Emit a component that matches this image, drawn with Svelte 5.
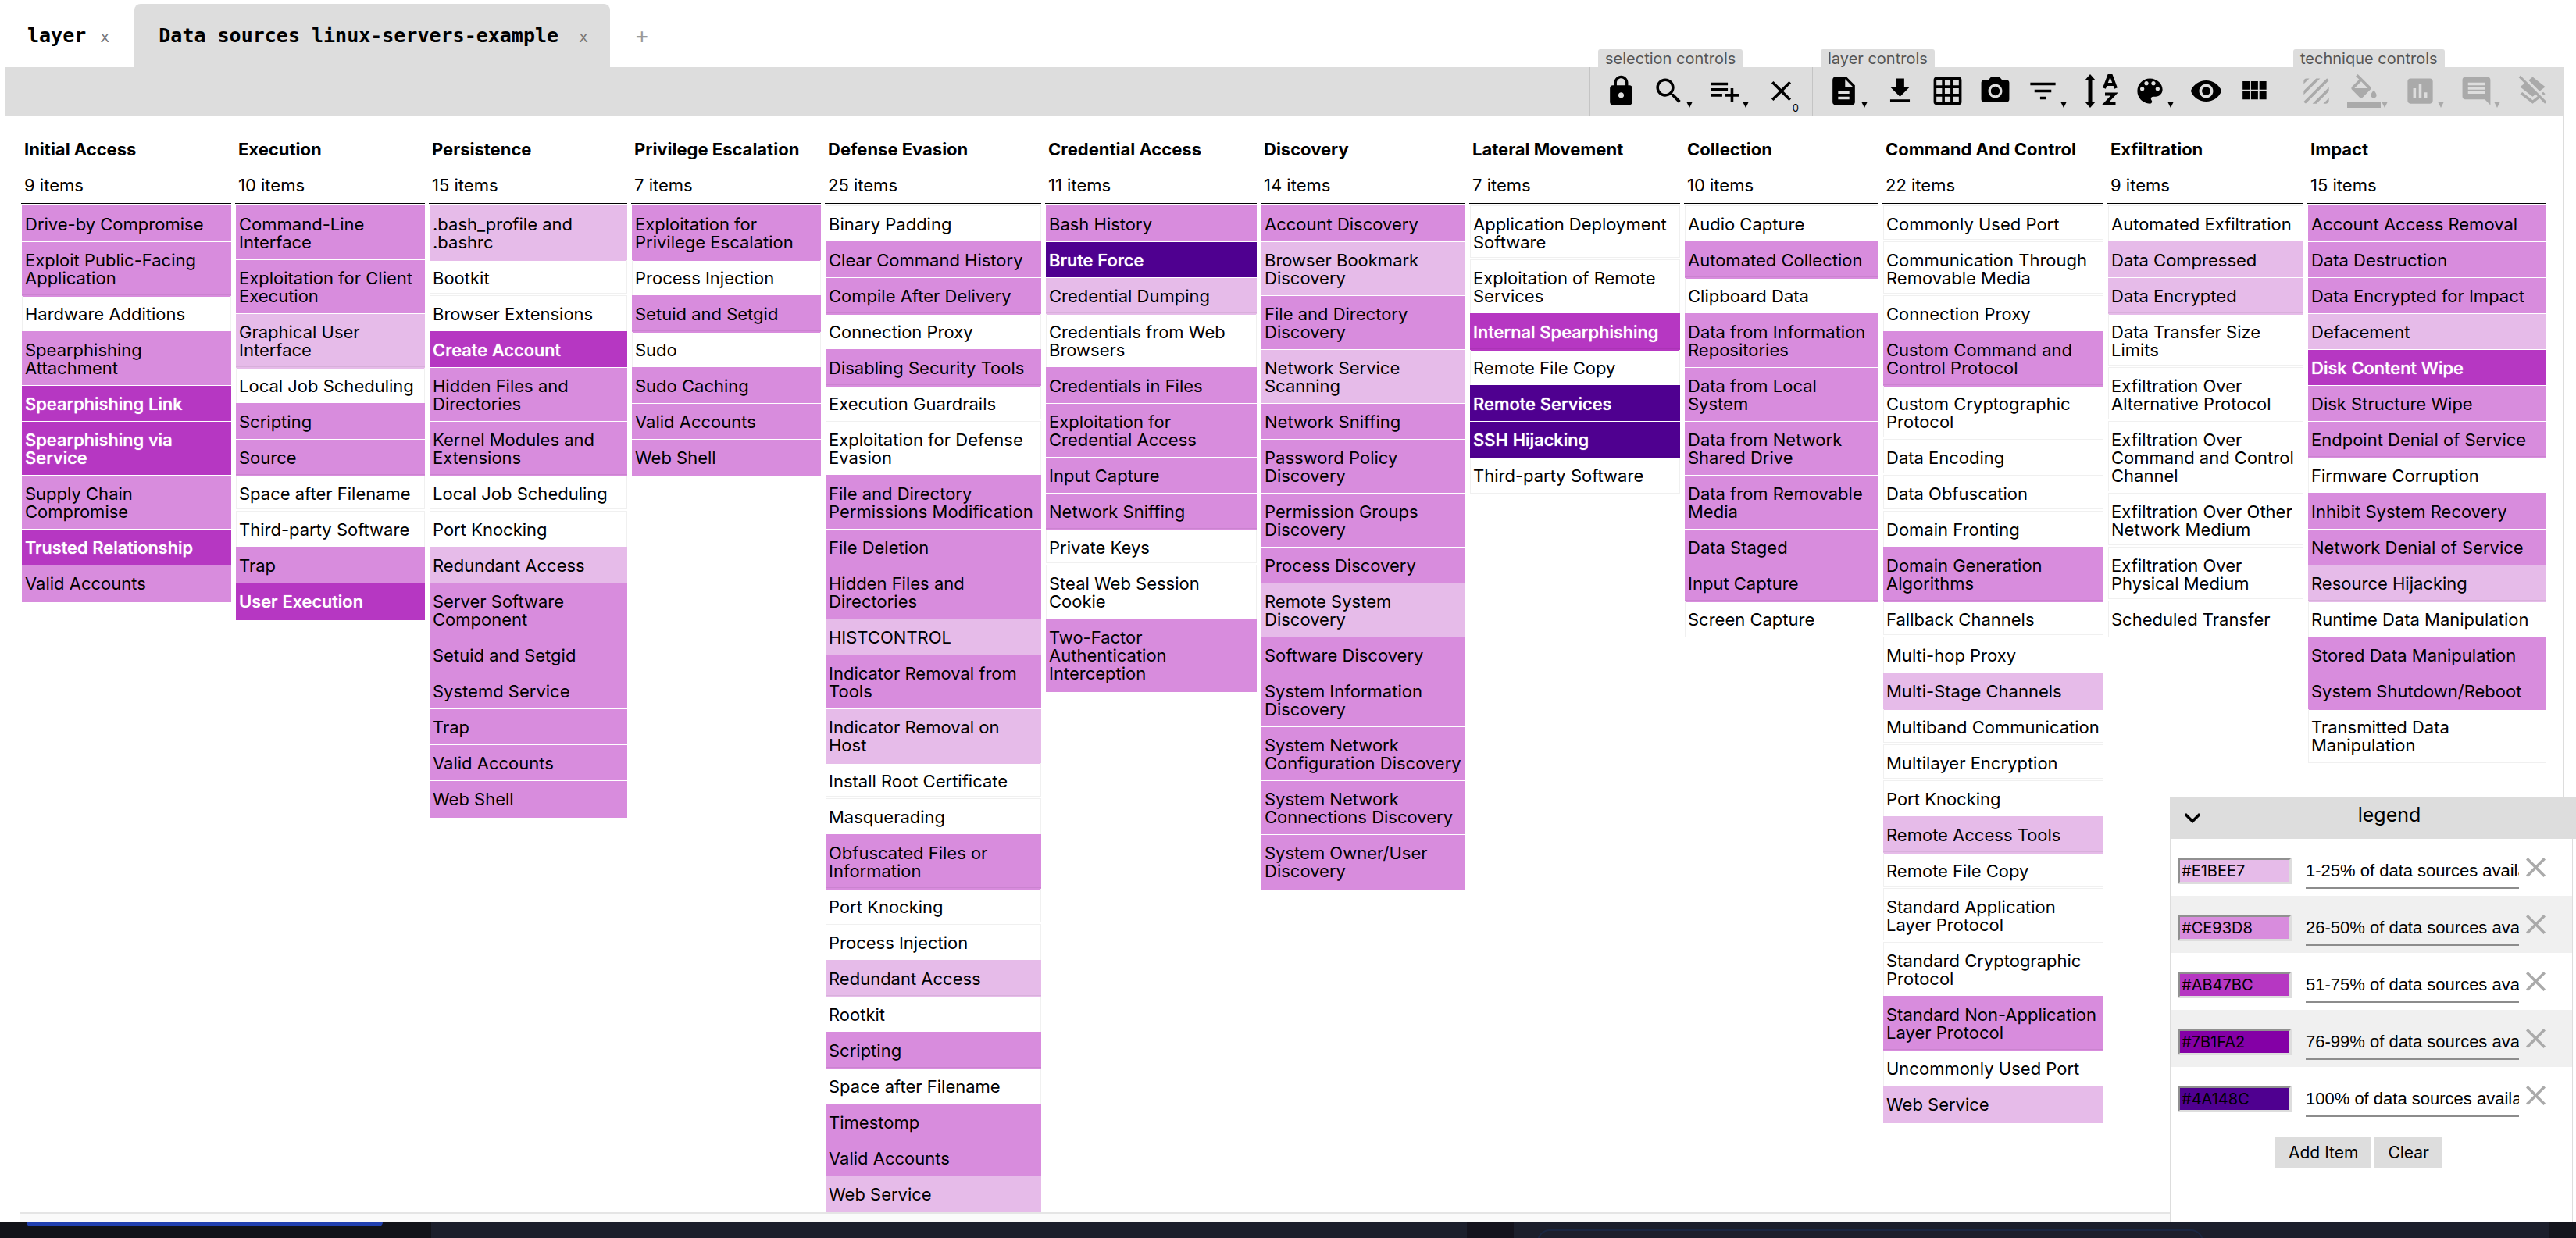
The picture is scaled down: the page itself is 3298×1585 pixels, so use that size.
<script>
  const icons = {
    lock: 'M18 8h-1V6c0-2.76-2.24-5-5-5S7 3.240 7 6v2H6c-1.100 0-2 .9-2 2v10c0 1.100.9 2 2 2h12c1.100 0 2-.9 2-2V10c0-1.100-.9-2-2-2zm-6 9c-1.100 0-2-.9-2-2s.9-2 2-2 2 .9 2 2-.9 2-2 2zm3.100-9H8.900V6c0-1.710 1.390-3.100 3.100-3.100 1.710 0 3.100 1.390 3.100 3.100v2z',
    search: 'M15.500 14h-.79l-.28-.27C15.410 12.590 16 11.110 16 9.500 16 5.910 13.090 3 9.500 3S3 5.910 3 9.500 5.910 16 9.500 16c1.610 0 3.090-.59 4.230-1.570l.27.28v.79l5 4.990L20.490 19l-4.990-5zm-6 0C7.010 14 5 11.990 5 9.500S7.010 5 9.500 5 14 7.010 14 9.500 11.990 14 9.500 14z',
    list: 'M14 10H2v2h12v-2zm0-4H2v2h12V6zm4 8v-4h-2v4h-4v2h4v4h2v-4h4v-2h-4zM2 16h8v-2H2v2z',
    close: 'M19 6.410L17.590 5 12 10.590 6.410 5 5 6.410 10.590 12 5 17.590 6.410 19 12 13.410 17.590 19 19 17.590 13.410 12z',
    doc: 'M14 2H6c-1.100 0-1.990.9-1.990 2L4 20c0 1.100.89 2 1.990 2H18c1.100 0 2-.9 2-2V8l-6-6zm2 16H8v-2h8v2zm0-4H8v-2h8v2zm-3-5V3.500L18.500 9H13z',
    download: 'M19 9h-4V3H9v6H5l7 7 7-7zM5 18v2h14v-2H5z',
    grid: 'M20 2H4c-1.100 0-2 .9-2 2v16c0 1.100.9 2 2 2h16c1.100 0 2-.9 2-2V4c0-1.100-.9-2-2-2zM8 20H4v-4h4v4zm0-6H4v-4h4v4zm0-6H4V4h4v4zm6 12h-4v-4h4v4zm0-6h-4v-4h4v4zm0-6h-4V4h4v4zm6 12h-4v-4h4v4zm0-6h-4v-4h4v4zm0-6h-4V4h4v4z',
    camera: 'M9 2L7.170 4H4c-1.100 0-2 .9-2 2v12c0 1.100.9 2 2 2h16c1.100 0 2-.9 2-2V6c0-1.100-.9-2-2-2h-3.170L15 2H9zm3 15c-2.760 0-5-2.240-5-5s2.240-5 5-5 5 2.240 5 5-2.240 5-5 5zM12 8.800a3.200 3.200 0 1 0 0 6.400 3.200 3.200 0 0 0 0-6.400z',
    filter: 'M10 18h4v-2h-4v2zM3 6v2h18V6H3zm3 7h12v-2H6v2z',
    palette: 'M12 3c-4.970 0-9 4.030-9 9s4.030 9 9 9c.83 0 1.500-.67 1.500-1.500 0-.39-.15-.74-.39-1.010-.23-.26-.38-.61-.38-.99 0-.83.67-1.500 1.500-1.500H16c2.760 0 5-2.240 5-5 0-4.420-4.030-8-9-8zm-5.500 9c-.83 0-1.500-.67-1.500-1.500S5.670 9 6.500 9 8 9.670 8 10.500 7.330 12 6.500 12zm3-4C8.670 8 8 7.330 8 6.500S8.670 5 9.500 5s1.500.67 1.500 1.500S10.330 8 9.500 8zm5 0c-.83 0-1.500-.67-1.500-1.500S13.670 5 14.500 5s1.500.67 1.500 1.500S15.330 8 14.500 8zm3 4c-.83 0-1.500-.67-1.500-1.500S16.670 9 17.500 9s1.500.67 1.500 1.500-.67 1.500-1.500 1.500z',
    eye: 'M12 4.500C7 4.500 2.730 7.610 1 12c1.730 4.390 6 7.500 11 7.500s9.270-3.110 11-7.500c-1.730-4.390-6-7.500-11-7.500zM12 17c-2.760 0-5-2.240-5-5s2.240-5 5-5 5 2.240 5 5-2.240 5-5 5zm0-8c-1.660 0-3 1.340-3 3s1.340 3 3 3 3-1.340 3-3-1.340-3-3-3z',
    modules: 'M4 11h5V5H4v6zm0 7h5v-6H4v6zm6 0h5v-6h-5v6zm6 0h5v-6h-5v6zm-6-7h5V5h-5v6zm6-6v6h5V5h-5z',
    texture: 'M19.510 3.080L3.080 19.510c.09.34.27.65.51.9.25.24.56.42.9.51L20.930 4.490c-.19-.69-.73-1.230-1.420-1.410zM11.880 3L3 11.880v2.830L14.710 3h-2.830zM5 3c-1.100 0-2 .9-2 2v2l4-4H5zm14 18c.55 0 1.050-.22 1.410-.59.37-.36.59-.86.59-1.410v-2l-4 4h2zm-9.710 0h2.830L21 12.120V9.290L9.290 21z',
    fill: 'M16.560 8.940L7.620 0 6.210 1.410l2.380 2.380-5.150 5.150c-.59.59-.59 1.540 0 2.120l5.500 5.500c.29.29.68.44 1.060.44s.77-.15 1.060-.44l5.500-5.500c.59-.58.59-1.530 0-2.120zM5.210 10L10 5.210 14.790 10H5.210zM19 11.500s-2 2.170-2 3.500c0 1.100.9 2 2 2s2-.9 2-2c0-1.330-2-3.500-2-3.500zM0 20h24v4H0z',
    chart: 'M19 3H5c-1.100 0-2 .9-2 2v14c0 1.100.9 2 2 2h14c1.100 0 2-.9 2-2V5c0-1.100-.9-2-2-2zM9 17H7v-7h2v7zm4 0h-2V7h2v10zm4 0h-2v-4h2v4z',
    comment: 'M20 2H4c-1.100 0-2 .9-2 2v12c0 1.100.9 2 2 2h14l4 4V4c0-1.100-.9-2-2-2zm-2 12H6v-2h12v2zm0-3H6V9h12v2zm0-3H6V6h12v2z',
    clear: 'M19.810 14.990l1.190-.92-1.430-1.430-1.190.92 1.430 1.430zm-.45-4.720L21 9l-9-7-2.910 2.270 7.870 7.880 2.400-1.880zM3.270 1L2 2.270l4.220 4.220L3 9l1.630 1.270L12 16l2.100-1.630 1.430 1.430L12 18.540l-7.370-5.730L3 14.070l9 7 4.950-3.850L20.730 21 22 19.730 3.270 1z'
  };

  const groups = [
    { label: 'selection controls', off: false, tools: [
      { name: 'lock multi-tactic selection', icon: 'lock' },
      { name: 'search', icon: 'search', menu: true },
      { name: 'multi-select', icon: 'list', menu: true },
      { name: 'deselect techniques', icon: 'close', count: '0' } ] },
    { label: 'layer controls', off: false, tools: [
      { name: 'layer information', icon: 'doc', menu: true },
      { name: 'download layer', icon: 'download' },
      { name: 'export to spreadsheet', icon: 'grid' },
      { name: 'render as image', icon: 'camera' },
      { name: 'filters', icon: 'filter', menu: true },
      { name: 'sort alphabetically', icon: 'az' },
      { name: 'color setup', icon: 'palette', menu: true },
      { name: 'show disabled', icon: 'eye' },
      { name: 'view mode', icon: 'modules' } ] },
    { label: 'technique controls', off: true, tools: [
      { name: 'toggle state', icon: 'texture' },
      { name: 'background color', icon: 'fill', menu: true },
      { name: 'scoring', icon: 'chart', menu: true },
      { name: 'comment', icon: 'comment', menu: true },
      { name: 'clear annotations', icon: 'clear' } ] }
  ];

  // A leading digit is the score band of a technique: 0 is unscored, 5 is full coverage.
  const tactics = [
    ['Initial Access', '2Drive-by Compromise|2Exploit Public-Facing Application|0Hardware Additions|2Spearphishing Attachment|3Spearphishing Link|3Spearphishing via Service|2Supply Chain Compromise|3Trusted Relationship|2Valid Accounts'],
    ['Execution', '2Command-Line Interface|2Exploitation for Client Execution|1Graphical User Interface|0Local Job Scheduling|2Scripting|2Source|0Space after Filename|0Third-party Software|2Trap|3User Execution'],
    ['Persistence', '1.bash_profile and .bashrc|0Bootkit|0Browser Extensions|3Create Account|2Hidden Files and Directories|2Kernel Modules and Extensions|0Local Job Scheduling|0Port Knocking|1Redundant Access|2Server Software Component|2Setuid and Setgid|2Systemd Service|2Trap|2Valid Accounts|2Web Shell'],
    ['Privilege Escalation', '2Exploitation for Privilege Escalation|0Process Injection|2Setuid and Setgid|0Sudo|2Sudo Caching|2Valid Accounts|2Web Shell'],
    ['Defense Evasion', '0Binary Padding|2Clear Command History|2Compile After Delivery|0Connection Proxy|2Disabling Security Tools|0Execution Guardrails|0Exploitation for Defense Evasion|2File and Directory Permissions Modification|2File Deletion|2Hidden Files and Directories|1HISTCONTROL|2Indicator Removal from Tools|1Indicator Removal on Host|0Install Root Certificate|0Masquerading|2Obfuscated Files or Information|0Port Knocking|0Process Injection|1Redundant Access|0Rootkit|2Scripting|0Space after Filename|2Timestomp|2Valid Accounts|1Web Service'],
    ['Credential Access', '2Bash History|5Brute Force|1Credential Dumping|0Credentials from Web Browsers|2Credentials in Files|2Exploitation for Credential Access|2Input Capture|2Network Sniffing|0Private Keys|0Steal Web Session Cookie|2Two-Factor Authentication Interception'],
    ['Discovery', '2Account Discovery|1Browser Bookmark Discovery|2File and Directory Discovery|1Network Service Scanning|2Network Sniffing|2Password Policy Discovery|2Permission Groups Discovery|2Process Discovery|1Remote System Discovery|2Software Discovery|2System Information Discovery|2System Network Configuration Discovery|2System Network Connections Discovery|2System Owner/User Discovery'],
    ['Lateral Movement', '0Application Deployment Software|0Exploitation of Remote Services|3Internal Spearphishing|0Remote File Copy|5Remote Services|5SSH Hijacking|0Third-party Software'],
    ['Collection', '0Audio Capture|2Automated Collection|0Clipboard Data|2Data from Information Repositories|2Data from Local System|2Data from Network Shared Drive|2Data from Removable Media|2Data Staged|2Input Capture|0Screen Capture'],
    ['Command And Control', '0Commonly Used Port|0Communication Through Removable Media|0Connection Proxy|2Custom Command and Control Protocol|0Custom Cryptographic Protocol|0Data Encoding|0Data Obfuscation|0Domain Fronting|2Domain Generation Algorithms|0Fallback Channels|0Multi-hop Proxy|1Multi-Stage Channels|0Multiband Communication|0Multilayer Encryption|0Port Knocking|1Remote Access Tools|0Remote File Copy|0Standard Application Layer Protocol|0Standard Cryptographic Protocol|2Standard Non-Application Layer Protocol|0Uncommonly Used Port|1Web Service'],
    ['Exfiltration', '0Automated Exfiltration|1Data Compressed|1Data Encrypted|0Data Transfer Size Limits|0Exfiltration Over Alternative Protocol|0Exfiltration Over Command and Control Channel|0Exfiltration Over Other Network Medium|0Exfiltration Over Physical Medium|0Scheduled Transfer'],
    ['Impact', '2Account Access Removal|2Data Destruction|2Data Encrypted for Impact|1Defacement|3Disk Content Wipe|2Disk Structure Wipe|2Endpoint Denial of Service|0Firmware Corruption|2Inhibit System Recovery|2Network Denial of Service|1Resource Hijacking|0Runtime Data Manipulation|2Stored Data Manipulation|2System Shutdown/Reboot|0Transmitted Data Manipulation']
  ].map(([name, list]) => ({
    name,
    items: list.split('|').map((t) => ({ band: +t[0], text: t.slice(1) }))
  }));

  let legend = $state([
    { band: 1, hex: '#E1BEE7', label: '1-25% of data sources available' },
    { band: 2, hex: '#CE93D8', label: '26-50% of data sources available' },
    { band: 3, hex: '#AB47BC', label: '51-75% of data sources available' },
    { band: 4, hex: '#7B1FA2', label: '76-99% of data sources available' },
    { band: 5, hex: '#4A148C', label: '100% of data sources available' }
  ]);
</script>

<div class="page">
  <main>
    <nav class="tabs">
      <div class="tab"><button class="title">layer</button><button class="x" aria-label="close layer">x</button></div>
      <div class="tab active"><button class="title">Data sources linux-servers-example</button><button class="x" aria-label="close Data sources">x</button></div>
      <button class="add">+</button>
    </nav>

    <div class="toolbar">
      {#each groups as g}
        <div class="group" class:off={g.off}>
          <span class="label">{g.label}</span>
          {#each g.tools as t}
            <button class="tool" class:menu={t.menu} disabled={g.off} aria-label={t.name}>
              {#if t.icon === 'az'}
                <svg class="az" viewBox="0 0 47 43" aria-hidden="true">
                  <path d="M10 0l7 8h-4.500v27H17l-7 8-7-8h4.500V8H3z" />
                  <path d="M28 18L34 2h3l6 16M30.500 13h10M29 25.500h12L29.500 37.500h13" class="stroke" />
                </svg>
              {:else}
                <svg viewBox="0 0 24 24" aria-hidden="true"><path d={icons[t.icon]} fill-rule={t.icon === 'camera' ? 'nonzero' : 'evenodd'} /></svg>
              {/if}
              {#if t.menu}<i class="caret"></i>{/if}
              {#if t.count}<span class="count">{t.count}</span>{/if}
            </button>
          {/each}
        </div>
      {/each}
    </div>

    <div class="sheet">
      <div class="matrix">
        {#each tactics as t}
          <section>
            <h2>{t.name}</h2>
            <p>{t.items.length} items</p>
            <ul>
              {#each t.items as item}
                <li class="b{item.band}" class:hit={item.band > 0} class:plain={item.band === 0}>{item.text}</li>
              {/each}
            </ul>
          </section>
        {/each}
      </div>
      <div class="foot"></div>
    </div>
  </main>

  <div class="desktop">
    <div class="left"><span class="pill"></span></div>
    <div class="mid"></div>
    <div class="gutter"></div>
    <div class="wide"><span class="outline"></span></div>
    <div class="right"></div>
  </div>

  <aside>
    <header>
      <button aria-label="collapse legend"><svg viewBox="0 0 24 24" aria-hidden="true"><path d="M7.410 8.590L12 13.170l4.590-4.580L18 10l-6 6-6-6z" /></svg></button>
      <h3>legend</h3>
    </header>
    <div class="legend">
      {#each legend as row, i}
        <div class="row">
          <input class="swatch b{row.band}" aria-label="color {i + 1}" bind:value={row.hex} />
          <input class="text" aria-label="label {i + 1}" bind:value={row.label} />
          <button aria-label="remove item {i + 1}"><svg viewBox="5 5 14 14" aria-hidden="true"><path d={icons.close} /></svg></button>
        </div>
      {/each}
      <div class="actions"><button>Add Item</button><button>Clear</button></div>
    </div>
  </aside>
</div>

<style>
  :global(body) { margin: 0; background: #fff; }
  * { box-sizing: border-box; }
  button { border: 0; background: none; padding: 0; margin: 0; font: inherit; color: inherit; }
  .page { position: relative; min-height: 100vh; display: flex; flex-direction: column; overflow: hidden; font-family: Inter, "Liberation Sans", sans-serif; color: #000; }
  main { flex: 1; display: flex; flex-direction: column; padding: 0 16px 0 6px; }

  .tabs { display: flex; height: 86px; padding-top: 5px; font-family: "DejaVu Sans Mono", "Liberation Mono", monospace; }
  .tab { display: flex; align-items: center; gap: 18px; padding: 0 32px 0 29px; border-radius: 8px 8px 0 0; }
  .active { gap: 26px; background: #ddd; padding: 0 28px 0 31px; }
  .title { font-size: 25px; font-weight: 700; }
  .x { font-size: 20px; color: #777; padding-top: 2px; }
  .add { padding: 0 33px; font-size: 26px; color: #999; }

  .toolbar { display: flex; justify-content: flex-end; height: 62px; background: #ddd; }
  .group { position: relative; display: flex; padding: 0 9px; border-left: 1px solid #c4c4c4; }
  .label { position: absolute; left: 10px; bottom: 100%; height: 23px; padding: 0 9px; border-radius: 3px 3px 0 0; background: #ddd; color: #555; font-size: 20px; line-height: 24px; white-space: nowrap; }
  .tool { position: relative; display: flex; padding: 9px 9px 0; }
  .menu { padding-right: 20px; }
  .tool svg { width: 43px; height: 43px; }
  .tool .az { width: 47px; }
  .stroke { fill: none; stroke: #000; stroke-width: 4; }
  .off { fill: #aaa; color: #aaa; }
  .caret { position: absolute; right: 11px; top: 44px; border: 4px solid transparent; border-top: 8px solid currentColor; border-bottom: 0; }
  .count { position: absolute; right: 8px; top: 46px; font-size: 13px; line-height: 12px; }

  .sheet { flex: 1; display: flex; flex-direction: column; border: 1px solid #ddd; border-width: 0 1px; padding: 23px 18px 0 18px; }
  .matrix { display: grid; gap: 5px; margin: 0 3px 0 2px; align-items: start; grid-template-columns: 269fr 243fr 254fr 243fr 277fr 271fr 262fr 270fr 249fr 283fr 251fr 306fr; }
  section { min-width: 0; }
  h2, p { margin: 0; padding-left: 4px; font-size: 22px; line-height: 40px; white-space: nowrap; }
  h2 { font-weight: 700; }
  p { padding-top: 6px; height: 50px; border-bottom: 1px solid #000; }
  ul { list-style: none; margin: 2px 0 0; padding: 0 0 0 1px; }
  li { padding: 12px 4px 10px; font-size: 22px; line-height: 23px; border-top: 1px solid transparent; }
  .plain { box-shadow: inset 1px 0 #f0f0f0, inset -1px 0 #f0f0f0; }
  .plain:first-child { border-top-color: #f0f0f0; }
  .plain:last-child { border-bottom: 1px solid #f0f0f0; }
  .plain + .plain { border-top-color: #f0f0f0; box-shadow: inset 1px 0 #f0f0f0, inset -1px 0 #f0f0f0, 0 -2px #fff, 0 -3px #f0f0f0; }
  .hit + .hit { border-top-color: #fff; }
  .b1 { --fill: #e6bbe9; }
  .b2 { --fill: #d88cdd; }
  .b3 { --fill: #b637c2; }
  .b4 { --fill: #8400a6; }
  .b5 { --fill: #4f0090; }
  .hit { background: var(--fill); }
  .hit:last-child { box-shadow: 0 2px var(--fill); }
  .hit:has(+ .plain) { box-shadow: inset 0 -1px rgb(0 0 0 / 6%), 0 2px var(--fill); }
  li.b3, li.b5 { color: #fff; font-weight: 500; text-shadow: 0 0 1px #fff; }
  .foot { flex: 1; min-height: 8px; margin-top: 1px; background: #fafafa; border-top: 2px solid #e5e5e5; }

  .desktop { display: flex; height: 20px; background: #1c1f2c; }
  .left { flex: 0 0 552px; padding-left: 34px; background: #121319; }
  .pill { display: block; width: 456px; height: 5px; border-radius: 0 0 10px 10px; background: #2140b0; }
  .mid { flex: 1326; }
  .gutter { flex: 60; background: #14131d; }
  .wide { flex: 1326; min-width: 0; overflow: hidden; }
  .outline { display: block; height: 40px; margin: 9px 443px 0 30px; border: 2px solid #1b2742; border-radius: 16px; }
  .right { width: 34px; background: #14151d; }

  aside { position: absolute; right: 0; bottom: 20px; width: 520px; height: 545px; background: #fff; }
  header { display: flex; align-items: center; height: 54px; background: #ddd; }
  header button { width: 58px; height: 54px; padding: 4px 0 0 8px; text-align: left; }
  header svg { width: 42px; height: 42px; }
  h3 { flex: 1; margin: 0; padding: 0 16px 8px 0; font-size: 25px; font-weight: 400; line-height: 30px; text-align: center; }
  .legend { height: 491px; margin-right: 4px; border: 1px solid #ddd; border-top: 0; }
  .row { display: flex; align-items: flex-start; height: 73px; padding: 24px 0 0 9px; }
  .row:nth-child(even) { background: #f0f0f0; }
  input { margin: 0; outline: 0; min-width: 0; }
  .swatch { width: 146px; height: 34px; padding: 0 2px; border: 3px solid; border-color: #909090 #ddd #ddd #909090; background: var(--fill); font: 20px Inter, sans-serif; color: #000; }
  .text { width: 273px; height: 40px; margin-left: 18px; padding: 0 0 4px; border: 0; border-bottom: 2px solid #8c8c8c; background: none; font: 22px "Liberation Sans", sans-serif; color: #000; }
  .row button { margin-left: 9px; fill: #aaa; }
  .row svg { display: block; width: 25px; height: 25px; }
  .actions { display: flex; justify-content: center; gap: 4px; padding: 17px 32px 0 0; }
  .actions button { height: 39px; padding: 0 17px; background: #ddd; font-size: 21px; }
</style>
